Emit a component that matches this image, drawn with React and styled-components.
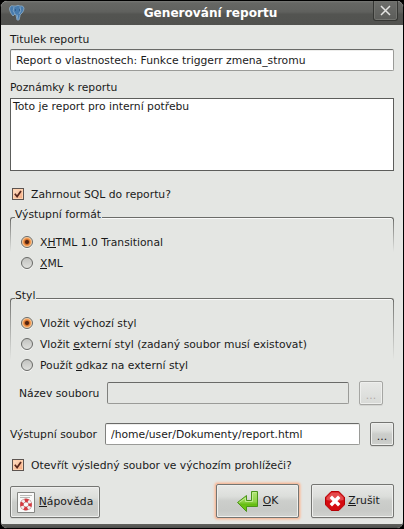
import React from 'react';
import styled, { createGlobalStyle, css } from 'styled-components';

const GlobalStyle = createGlobalStyle`
  * { box-sizing: border-box; }
  body { margin: 0; background: #000; overflow: hidden; }
`;

const Window = styled.main`
  display: flex;
  flex-direction: column;
  width: 404px;
  height: 529px;
  overflow: hidden;
  border: 1px solid #000;
  border-radius: 7px;
  background: #e4e6e3;
  font: 10.78px/14px 'DejaVu Sans', sans-serif;
  color: #1a1a1a;
  white-space: nowrap;
`;

const TitleBar = styled.header`
  display: grid;
  grid-template-columns: 30px 1fr 32px;
  flex: none;
  height: 24px;
  background: linear-gradient(#777875 0, #666764 2px, #60615e 45%, #535451 55%, #51524f 100%);
`;

const AppIcon = styled.svg`
  width: 17px;
  height: 17px;
  margin: 3px 0 0 7px;
`;

const Title = styled.h1`
  margin: 0;
  padding-left: 19px;
  font-size: 12.1px;
  line-height: 25px;
  font-weight: bold;
  text-align: center;
  color: #fff;
`;

const CloseButton = styled.button`
  display: grid;
  place-items: center;
  width: 25px;
  height: 20px;
  padding: 0;
  margin-left: 2px;
  border: 1px solid #353633;
  border-top: 0;
  border-radius: 0 0 3px 3px;
  background: linear-gradient(#6d6e6b, #5b5c59);
  box-shadow: inset 0 0 0 1px #72736f;
`;

const Content = styled.div`
  display: flex;
  flex-direction: column;
  flex: 1;
  padding: 8px 9px 0;
`;

const FieldLabel = styled.label`
  height: 16px;
  margin-top: ${(p) => p.$top || 0}px;
  margin-bottom: ${(p) => p.$bottom || 0}px;
`;

const fieldBorder = css`
  border: 1px solid #9a9b98;
  border-top-color: #696a68;
  border-left-color: #7f807d;
  border-radius: 2px;
  outline: 0;
  font: inherit;
  color: inherit;
`;

const TextInput = styled.input`
  ${fieldBorder}
  width: ${(p) => p.$width}px;
  height: 22px;
  padding: 0 5px;
  background: #fff;
  box-shadow: inset 0 1px #ededeb;
  &:disabled { background: #e4e6e3; box-shadow: none; }
`;

const Notes = styled.textarea`
  ${fieldBorder}
  display: block;
  height: 73px;
  padding: 1px 2px;
  border-color: #5c5d5b;
  border-radius: 0;
  background: #fff;
  resize: none;
`;

const Choice = styled.label`
  display: flex;
  align-items: center;
  height: ${(p) => (p.$radio ? 21 : 14)}px;
  gap: 7px;
  padding-left: ${(p) => (p.$radio ? 11 : 2)}px;
  margin-top: ${(p) => p.$top || 0}px;
`;

const ChoiceText = styled.span`
  padding-top: ${(p) => (p.$radio ? 3 : 2)}px;
`;

const CheckBox = styled.span`
  display: grid;
  place-items: center;
  width: 12px;
  height: 12px;
  border: 1px solid #5c5450;
  background: linear-gradient(135deg, #ffe4cc, #f5a578);
  box-shadow: inset 0 0 0 1px #ffd2b0;
`;

const RadioDot = styled.span`
  display: grid;
  place-items: center;
  width: 12px;
  height: 12px;
  border: 1px solid #686966;
  border-radius: 50%;
  background: ${(p) =>
    p.$on
      ? 'radial-gradient(circle, #542411 0 1.5px, #d8742d 2.6px, #f6a45f 3.8px, #ffe0bd 5px)'
      : 'linear-gradient(#c2c3c0, #dfe0dd)'};
  box-shadow: 0 1px #f5f5f4;
`;

const Group = styled.section`
  display: flex;
  flex-direction: column;
  height: ${(p) => p.$height}px;
  margin-top: ${(p) => p.$top || 0}px;
`;

const GroupHeading = styled.div`
  display: flex;
  height: 14px;
  &::before {
    content: '';
    width: 4px;
    height: 4px;
    margin-top: 10px;
    border: solid #6b6c69;
    border-width: 1px 0 0 1px;
    border-radius: 3px 0 0 0;
  }
  &::after {
    content: '';
    flex: 1;
    height: 4px;
    margin: 10px 0 0 1px;
    border: solid #6b6c69;
    border-width: 1px 1px 0 0;
    border-radius: 0 3px 0 0;
    box-shadow: inset 0 1px #fafafa;
  }
`;

const GroupLegend = styled.span`
  padding-top: 1px;
`;

const GroupBody = styled.div`
  display: flex;
  flex-direction: column;
  flex: 1;
  padding-top: ${(p) => p.$top}px;
  background:
    linear-gradient(#777875, transparent) left top / 1px ${(p) => p.$fade}px no-repeat,
    linear-gradient(#777875, transparent) right top / 1px ${(p) => p.$fade}px no-repeat;
`;

const FileRow = styled.div`
  display: flex;
  align-items: center;
  height: 24px;
  padding-left: ${(p) => p.$indent || 0}px;
  margin-top: ${(p) => p.$top}px;
`;

const FileLabel = styled.label`
  width: ${(p) => p.$width}px;
  padding-top: 2px;
`;

const buttonSurface = css`
  padding: 0;
  border: 1px solid #747572;
  border-radius: 2px;
  background: linear-gradient(#e7e8e6 0, #dcdedb 35%, #cccecb 50%, #c8cac7 80%, #d0d2cf 100%);
  box-shadow: inset 0 0 0 1px #eeefed, 0 1px #d4d5d2;
  font: inherit;
  color: inherit;
`;

const BrowseButton = styled.button`
  ${buttonSurface}
  width: 24px;
  height: 24px;
  margin-left: 10px;
  padding-top: 5px;
  &:disabled {
    border-color: #a5a6a3;
    color: #b3aaa7;
    background: linear-gradient(#e7e8e6, #d8dad7);
  }
`;

const Actions = styled.footer`
  display: flex;
  align-items: flex-end;
  height: 34px;
  margin-top: 12px;
`;

const ActionButton = styled.button`
  ${buttonSurface}
  display: flex;
  align-items: center;
  justify-content: center;
  width: ${(p) => p.$width}px;
  height: ${(p) => p.$height}px;
  gap: ${(p) => p.$gap}px;
  margin-left: ${(p) => p.$left || 0}px;
  ${(p) =>
    p.$primary &&
    css`
      box-shadow: inset 0 0 0 1px #eeefed, 0 0 0 1px #f3bea2, 0 0 2px 2px #f5c8b0;
    `}
`;

const BottomFrame = styled.div`
  flex: none;
  height: 4px;
  background: linear-gradient(#62635f, #4d4e4b);
`;

const Key = styled.u`
  display: inline-block;
  height: 12px;
  text-decoration: none;
  box-shadow: inset 0 -1px #1a1a1a;
`;

function ElephantIcon() {
  return (
    <AppIcon viewBox="0 0 17 17">
      <path d="M2 3Q3 1 6 2L8 2Q10 .5 12 2Q15 1 16 4Q16 7 14 9L12 11L12 12L11 16L9 16L8 11L7 10L5 12Q3 10 2 7Q1 5 2 3Z" fill="#477bad" stroke="#91aec5" strokeWidth=".8" />
      <path d="M6 3Q4 7 7 10M12 3Q14 7 11 10" fill="none" stroke="#a6bdd0" strokeWidth=".6" />
      <path d="M9 10.5L10 15" stroke="#7da7ce" />
      <path d="M7 6H8M11 6H12" stroke="#20476e" />
    </AppIcon>
  );
}

function CheckMark() {
  return (
    <svg width="10" height="10" viewBox="0 0 10 10">
      <path d="M1.8 4.8L4.1 7.6L8 1.9" fill="none" stroke="#57271c" strokeWidth="1.7" />
    </svg>
  );
}

function HelpIcon() {
  return (
    <svg width="18" height="22" viewBox="0 0 18 22">
      <path d="M.5 1.5H17.5V21.5H.5Z" fill="#fafaf9" stroke="#858683" />
      <path d="M3 4.5H15M3 6.5H13" stroke="#b8b9b6" />
      <circle cx="9" cy="13.5" r="4.2" fill="none" stroke="#a05555" strokeWidth="3.8" />
      <circle cx="9" cy="13.5" r="4.2" fill="none" stroke="#f5eeee" strokeWidth="3" />
      <circle cx="9" cy="13.5" r="4.2" fill="none" stroke="#d6393f" strokeWidth="3.2" strokeDasharray="3.7 2.9" strokeDashoffset="1.85" />
    </svg>
  );
}

function EnterIcon() {
  return (
    <svg width="23" height="23" viewBox="0 0 23 23">
      <defs>
        <linearGradient id="enterGreen" x2="0" y2="1">
          <stop stopColor="#b2e575" />
          <stop offset=".5" stopColor="#8fd446" />
          <stop offset=".65" stopColor="#66bd13" />
          <stop offset="1" stopColor="#70cf0c" />
        </linearGradient>
      </defs>
      <path d="M14.5 1.5H20.5V16.5H9.5V21.5L.5 12.5L9.5 5.5V10.5H14.5Z" fill="url(#enterGreen)" stroke="#4b941a" strokeLinejoin="round" />
      <path d="M15.6 2.6H19.4M15.5 3V11.5H8.5V8L2.2 12.5" fill="none" stroke="#c9efa0" strokeWidth=".8" />
    </svg>
  );
}

function StopIcon() {
  return (
    <svg width="20" height="20" viewBox="0 0 20 20">
      <path d="M6.2 .5H13.8L19.5 6.2V13.8L13.8 19.5H6.2L.5 13.8V6.2Z" fill="#d40b10" stroke="#b40005" />
      <path d="M6.6 1.5H13.4L18.5 6.6V9Q10 11 1.5 9V6.6Z" fill="#e44a4c" />
      <path d="M7 7L13 13M13 7L7 13" stroke="#fff" strokeWidth="3.4" strokeLinecap="square" />
    </svg>
  );
}

function Radio({ on, children }) {
  return (
    <Choice $radio>
      <RadioDot $on={on} />
      <ChoiceText $radio>{children}</ChoiceText>
    </Choice>
  );
}

function Check({ top, children }) {
  return (
    <Choice $top={top}>
      <CheckBox><CheckMark /></CheckBox>
      <ChoiceText>{children}</ChoiceText>
    </Choice>
  );
}

export default function App() {
  return (
    <>
      <GlobalStyle />
      <Window>
        <TitleBar>
          <ElephantIcon />
          <Title>Generování reportu</Title>
          <CloseButton aria-label="Zavřít">
            <svg width="11" height="11" viewBox="0 0 11 11">
              <path d="M1 1L10 10M10 1L1 10" stroke="#e4e4e2" strokeWidth="1.5" />
            </svg>
          </CloseButton>
        </TitleBar>
        <Content>
          <FieldLabel>Titulek reportu</FieldLabel>
          <TextInput $width={384} defaultValue="Report o vlastnostech: Funkce triggerr zmena_stromu" />
          <FieldLabel $top={10} $bottom={1}>Poznámky k reportu</FieldLabel>
          <Notes spellCheck={false} defaultValue="Toto je report pro interní potřebu" />
          <Check top={16}>Zahrnout SQL do reportu?</Check>
          <Group $top={6} $height={81}>
            <GroupHeading><GroupLegend>Výstupní formát</GroupLegend></GroupHeading>
            <GroupBody $top={10} $fade={31}>
              <Radio on>X<Key>H</Key>TML 1.0 Transitional</Radio>
              <Radio><Key>X</Key>ML</Radio>
            </GroupBody>
          </Group>
          <Group $height={117}>
            <GroupHeading><GroupLegend>Styl</GroupLegend></GroupHeading>
            <GroupBody $top={10} $fade={58}>
              <Radio on>Vložit výchozí styl</Radio>
              <Radio>Vložit <Key>e</Key>xterní styl (zadaný soubor musí existovat)</Radio>
              <Radio>Použít <Key>o</Key>dkaz na externí styl</Radio>
              <FileRow $top={6} $indent={9}>
                <FileLabel $width={88}>Název souboru</FileLabel>
                <TextInput $width={242} disabled />
                <BrowseButton disabled>...</BrowseButton>
              </FileRow>
            </GroupBody>
          </Group>
          <FileRow $top={17}>
            <FileLabel $width={95}>Výstupní soubor</FileLabel>
            <TextInput $width={255} defaultValue="/home/user/Dokumenty/report.html" />
            <BrowseButton>...</BrowseButton>
          </FileRow>
          <Check top={12}>Otevřít výsledný soubor ve výchozím prohlížeči?</Check>
          <Actions>
            <ActionButton $width={90} $height={32} $gap={4}>
              <HelpIcon /><span><Key>N</Key>ápověda</span>
            </ActionButton>
            <ActionButton $width={83} $height={34} $gap={3} $left={116} $primary>
              <EnterIcon /><span><Key>O</Key>K</span>
            </ActionButton>
            <ActionButton $width={83} $height={34} $gap={3} $left={12}>
              <StopIcon /><span><Key>Z</Key>rušit</span>
            </ActionButton>
          </Actions>
        </Content>
        <BottomFrame />
      </Window>
    </>
  );
}
